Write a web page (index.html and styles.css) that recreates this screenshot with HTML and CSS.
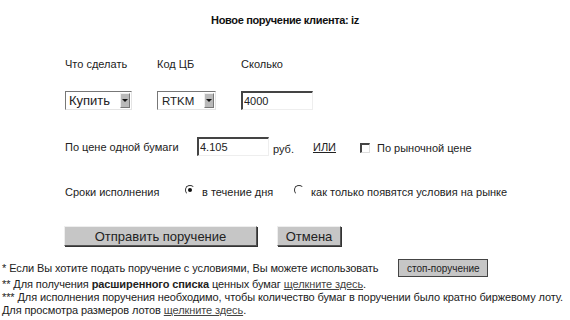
FILE: index.html
```html
<!DOCTYPE html>
<html lang="ru">
<head>
    <meta charset="UTF-8">
    <title>Новое поручение клиента</title>
    <link rel="stylesheet" href="styles.css">
</head>
<body>

    <h1 class="title">Новое поручение клиента: iz</h1>

    <div class="order">
        <div class="grid">
            <span class="cap">Что сделать</span>
            <span class="cap">Код ЦБ</span>
            <span class="cap">Сколько</span>

            <div class="select sel-action">
                <select><option>Купить</option><option>Продать</option></select>
                <span class="drop"><i></i></span>
            </div>
            <div class="select sel-code">
                <select><option>RTKM</option></select>
                <span class="drop"><i></i></span>
            </div>
            <input class="field" type="text" value="4000">
        </div>

        <div class="price">
            <span class="price-cap">По цене одной бумаги</span>
            <input class="field" type="text" value="4.105">
            <span class="rub">руб.</span>
            <span class="or">ИЛИ</span>
            <span class="check"><span class="box"></span>По рыночной цене</span>
        </div>

        <div class="term">
            <span class="term-cap">Сроки исполнения</span>
            <span class="opt opt-day"><span class="radio on"></span>в течение дня</span>
            <span class="opt"><span class="radio"></span>как только появятся условия на рынке</span>
        </div>

        <div class="actions">
            <button class="btn send">Отправить поручение</button>
            <button class="btn cancel">Отмена</button>
        </div>
    </div>

    <div class="notes">
        <p class="stop-line">* Если Вы хотите подать поручение с условиями, Вы можете использовать <button class="btn stop">стоп-поручение</button></p>
        <p>** Для получения <b>расширенного списка</b> ценных бумаг <a href="#">щелкните здесь</a>.</p>
        <p>*** Для исполнения поручения необходимо, чтобы количество бумаг в поручении было кратно биржевому лоту.</p>
        <p>Для просмотра размеров лотов <a href="#">щелкните здесь</a>.</p>
    </div>

</body>
</html>
```

FILE: styles.css
```css
body {
    margin: 0;
    font-family: 'Liberation Sans', Arial, sans-serif;
    font-size: 11px;
    color: #222;
    background: #fff;
}

.title {
    margin: 14px 0 0;
    font-size: 11px;
    line-height: 13px;
    letter-spacing: -0.35px;
    text-align: center;
    color: #111;
}

.order {
    padding-left: 65px;
}

.grid {
    display: grid;
    grid-template-columns: 92px 84px 80px;
    grid-template-rows: 13px 19px;
    row-gap: 20px;
    margin-top: 31px;
    line-height: 13px;
}

.select {
    display: flex;
    align-items: center;
    height: 19px;
    box-sizing: border-box;
    border: 1px solid #777;
    border-right-color: #e4e4e4;
    border-bottom-color: #e4e4e4;
    background: #fff;
}

.sel-action { width: 67px; }
.sel-code { width: 59px; }

.select select {
    appearance: none;
    -webkit-appearance: none;
    flex: 1;
    min-width: 0;
    border: none;
    background: transparent;
    padding: 0 0 0 3px;
    font: 13px 'Liberation Sans', Arial, sans-serif;
    color: #222;
    outline: none;
}

.sel-code select {
    font-size: 11.5px;
    padding-left: 4px;
}

.drop {
    width: 8px;
    height: 13px;
    margin-right: 1px;
    background: #b9b9b9;
    border: 1px solid #777;
    border-top-color: #eee;
    border-left-color: #eee;
    display: flex;
    align-items: center;
    justify-content: center;
}

.drop i {
    border-left: 3px solid transparent;
    border-right: 3px solid transparent;
    border-top: 3px solid #111;
}

.field {
    height: 19px;
    box-sizing: border-box;
    width: 72px;
    border: 1px solid #eee;
    border-top: 2px solid #444;
    border-left: 2px solid #444;
    padding: 0 1px;
    font: 11px 'Liberation Sans', Arial, sans-serif;
    color: #222;
    outline: none;
}

.price {
    display: flex;
    align-items: center;
    margin-top: 27px;
    height: 19px;
}

.price-cap { width: 132px; }

.rub {
    margin-left: 4px;
    padding-top: 4px;
}

.or {
    margin-left: 19px;
    text-decoration: underline;
}

.check {
    display: flex;
    align-items: center;
    margin-left: 24px;
    padding-top: 2px;
}

.box {
    width: 7px;
    height: 7px;
    margin-right: 7px;
    border: 1px solid #ddd;
    border-top: 2px solid #444;
    border-left: 2px solid #444;
}

.term {
    display: flex;
    align-items: center;
    margin-top: 29px;
    height: 13px;
}

.term-cap { width: 120px; }

.opt {
    display: flex;
    align-items: center;
}

.opt-day { width: 109px; }

.radio {
    position: relative;
    width: 8px;
    height: 8px;
    margin-right: 7px;
    margin-top: -4px;
    border-radius: 50%;
    border: 1px solid transparent;
    border-top-color: #333;
    border-left-color: #333;
}

.radio.on::after {
    content: "";
    position: absolute;
    left: 2px;
    top: 2px;
    width: 4px;
    height: 4px;
    border-radius: 50%;
    background: #111;
}

.actions {
    display: flex;
    gap: 20px;
    margin-top: 28px;
    margin-left: -1px;
}

.btn {
    font-family: 'Liberation Sans', Arial, sans-serif;
    color: #222;
    background: #c6c6c6;
    border: 1px solid #555;
    border-top-color: #eee;
    border-left-color: #eee;
    box-shadow: 1px 1px 0 #333;
    padding: 0;
}

.send {
    width: 193px;
    height: 20px;
    font-size: 13px;
}

.cancel {
    width: 64px;
    height: 20px;
    font-size: 13px;
}

.notes {
    margin-top: 13px;
    padding-left: 2px;
    line-height: 13px;
    letter-spacing: -0.1px;
    white-space: nowrap;
}

.notes p {
    margin: 0;
}

.stop-line {
    display: flex;
    align-items: center;
    height: 18px;
    margin-bottom: 1px !important;
}

.stop {
    margin-left: 20px;
    width: 90px;
    height: 18px;
    font-size: 10px;
    letter-spacing: 0;
    box-shadow: none;
    border: 1px solid #444;
}

.notes a {
    color: #444;
}
```
